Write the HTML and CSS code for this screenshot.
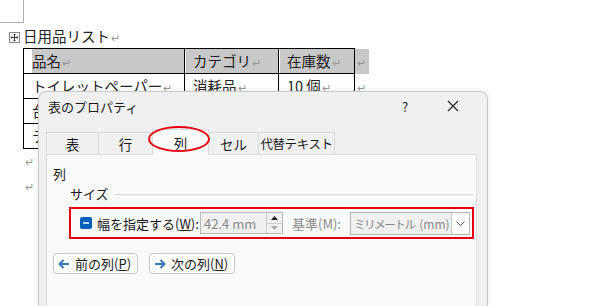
FILE: index.html
```html
<!DOCTYPE html>
<html lang="ja">
<head>
<meta charset="utf-8">
<link rel="stylesheet" href="styles.css">
</head>
<body>
<div class="page">
  <div class="corner"></div>
  <div class="doc">
    <div class="title-line">
      <span class="move-handle"><svg width="11" height="11" viewBox="0 0 11 11"><rect x="0.5" y="0.5" width="10" height="10" fill="#fff" stroke="#888"/><path d="M5.5 2v7M2 5.5h7" stroke="#333" stroke-width="1"/><path d="M5.5 1.5l-1.5 1.5h3zM5.5 9.5l-1.5-1.5h3zM1.5 5.5l1.5-1.5v3zM9.5 5.5l-1.5-1.5v3z" fill="#333"/></svg></span>
      <p class="doc-title">日用品リスト<span class="pm">↵</span></p>
    </div>
    <div class="table-wrap">
      <table class="doc-table">
        <tr class="sel"><td class="c1">品名<span class="pm">↵</span></td><td class="c2">カテゴリ<span class="pm">↵</span></td><td class="c3">在庫数<span class="pm">↵</span></td><td class="end sel-end"><span class="pm">↵</span></td></tr>
        <tr><td class="c1">トイレットペーパー<span class="pm">↵</span></td><td class="c2">消耗品<span class="pm">↵</span></td><td class="c3">10 個<span class="pm">↵</span></td><td class="end"><span class="pm">↵</span></td></tr>
        <tr><td class="c1">台</td><td class="c2"></td><td class="c3"></td><td class="end"></td></tr>
        <tr><td class="c1">テ</td><td class="c2"></td><td class="c3"></td><td class="end"></td></tr>
      </table>
    </div>
    <p class="empty"><span class="pm">↵</span></p>
    <p class="empty"><span class="pm">↵</span></p>
  </div>

  <div class="dialog">
    <div class="titlebar">
      <span class="dlg-title">表のプロパティ</span>
      <span class="help">?</span>
      <span class="close"><svg width="12" height="12" viewBox="0 0 12 12"><path d="M1 1l10 10M11 1L1 11" stroke="#222" stroke-width="1.1"/></svg></span>
    </div>
    <div class="tabs">
      <div class="tab t1">表</div>
      <div class="tab t2">行</div>
      <div class="tab t3 active">列<span class="ellipse"></span></div>
      <div class="tab t4">セル</div>
      <div class="tab t5">代替テキスト</div>
    </div>
    <div class="panel">
      <div class="sec">列</div>
      <div class="group-head"><span>サイズ</span><span class="rule"></span></div>
      <div class="size-row">
        <span class="check"><svg width="12" height="12" viewBox="0 0 12 12"><rect width="12" height="12" rx="2" fill="#005fb8"/><path d="M3 6h6" stroke="#fff" stroke-width="1.4"/></svg></span>
        <span class="lbl">幅を指定する(<u>W</u>):</span>
        <span class="spin"><span class="val">42.4 mm</span><span class="arrows"><span class="up"><svg width="7" height="4" viewBox="0 0 7 4"><path d="M0 4L3.5 0 7 4z" fill="#222"/></svg></span><span class="dn"><svg width="7" height="4" viewBox="0 0 7 4"><path d="M0 0L3.5 4 7 0z" fill="#aaa"/></svg></span></span></span>
        <span class="lbl2">基準(M):</span>
        <span class="select"><span class="sval"><span class="kana">ミリメートル</span> (mm)</span><span class="chev"><svg width="9" height="5" viewBox="0 0 9 5"><path d="M0.5 0.5L4.5 4.5 8.5 0.5" fill="none" stroke="#555" stroke-width="1"/></svg></span></span>
      </div>
      <div class="nav">
        <button class="btn"><svg width="12" height="10" viewBox="0 0 12 10"><path d="M11 5H2M5.5 1L1.5 5l4 4" fill="none" stroke="#3c78b4" stroke-width="2"/></svg><span>前の列(<u>P</u>)</span></button>
        <button class="btn"><svg width="12" height="10" viewBox="0 0 12 10"><path d="M1 5h9M6.5 1l4 4-4 4" fill="none" stroke="#3c78b4" stroke-width="2"/></svg><span>次の列(<u>N</u>)</span></button>
      </div>
    </div>
  </div>
</div>
</body>
</html>
```

FILE: styles.css
```css
* { box-sizing: border-box; }
html, body { margin: 0; padding: 0; background: #fff; }
body { width: 614px; height: 306px; overflow: hidden; font-family: "Noto Sans CJK JP", "Noto Sans", sans-serif; }
.page { position: relative; width: 614px; height: 306px; overflow: hidden; }
.corner { position: absolute; left: 0; top: 0; width: 24px; height: 23px; border-right: 1px solid #b0b0b0; border-bottom: 1px solid #b0b0b0; }
.doc { padding: 26px 0 0 9px; font-size: 14.5px; color: #222; }
.title-line { display: flex; align-items: center; height: 20px; }
.move-handle { width: 14px; display: flex; margin-top: 2px; }
.doc-title { margin: 0; line-height: 20px; }
.pm { color: #999; font-size: 11px; margin-left: 1px; }
.table-wrap { padding: 2px 0 0 14px; }
.doc-table { border-collapse: collapse; }
.doc-table td { height: 25px; padding: 0 0 0 8px; border: 1.5px solid #000; line-height: 20px; white-space: nowrap; vertical-align: middle; }
.doc-table .c1 { width: 161px; }
.doc-table .c2 { width: 94px; }
.doc-table .c3 { width: 76px; }
.doc-table td.end { border: none; width: 14px; padding: 0 0 0 1px; }
.sel td.c1, .sel td.c2, .sel td.c3 { background: #c8c8c8; box-shadow: inset 1px 0 0 #fff; }
.sel td.sel-end { background: #c8c8c8; }
.sel td.c1 { box-shadow: inset 8px 0 0 #fff; }
.empty { margin: 0 0 0 15px; height: 25px; line-height: 22px; }

.dialog { position: absolute; left: 38px; top: 91px; width: 450px; height: 215px; background: #f0f0f0; border: 1px solid #c9c9c9; border-bottom: none; border-radius: 8px 8px 0 0; box-shadow: 0 0 6px rgba(0,0,0,0.08); font-size: 13px; color: #1a1a1a; overflow: hidden; }
.titlebar { display: flex; align-items: center; height: 28px; padding: 0 0 0 9px; }
.dlg-title { flex: 1; font-size: 13px; }
.help { width: 45px; text-align: left; font-size: 13px; }
.close { width: 40px; display: flex; }
.tabs { display: flex; align-items: flex-end; margin: 10px 0 0 7px; height: 24px; position: relative; z-index: 2; }
.tab { height: 22px; border: 1px solid #dcdcdc; border-bottom: none; margin-left: -1px; background: #f0f0f0; display: flex; align-items: center; justify-content: center; font-size: 13.5px; white-space: nowrap; }
.t1 { width: 53px; margin-left: 0; }
.t2 { width: 55px; }
.t3 { width: 57px; }
.t4 { width: 51px; }
.t5 { width: 77px; font-size: 12.5px; letter-spacing: -0.4px; }
.tab.active { background: #f9f9f9; position: relative; margin-bottom: -1px; height: 26px; }
.ellipse { position: absolute; left: -5px; top: -4px; width: 62px; height: 26px; border: 2px solid #e60012; border-radius: 50%; }
.panel { margin: 0 0 0 7px; width: 431px; height: 160px; background: #f9f9f9; border: 1px solid #dcdcdc; padding: 10px 0 0 6px; }
.sec { font-size: 13px; line-height: 18px; }
.group-head { display: flex; align-items: center; margin: 1px 0 0 17px; height: 18px; font-size: 13px; }
.group-head .rule { flex: 1; height: 1px; background: #d8d8d8; margin: 2px 3px 0 6px; }
.size-row { display: flex; align-items: center; margin: 5px 0 0 16px; width: 405px; height: 32px; border: 2px solid #e60012; padding-left: 9px; white-space: nowrap; }
.check { display: flex; margin-right: 5px; }
.lbl { width: 103px; }
.spin { display: flex; align-items: center; width: 83px; height: 22px; border: 1px solid #b9b9b9; background: #f0f0f0; }
.spin .val { flex: 1; padding-left: 3px; color: #8a8a8a; font-size: 13px; }
.arrows { display: flex; flex-direction: column; width: 16px; height: 20px; border-left: 1px solid #d0d0d0; }
.arrows span { flex: 1; display: flex; align-items: center; justify-content: center; }
.arrows .up { border-bottom: 1px solid #d0d0d0; }
.lbl2 { margin-left: 9px; width: 58px; color: #8a8a8a; }
.select { display: flex; align-items: center; width: 120px; height: 23px; border: 1px solid #b4b4b4; background: #f0f0f0; }
.sval { flex: 1; padding-left: 3px; color: #8a8a8a; font-size: 12px; white-space: nowrap; overflow: hidden; }
.sval .kana { font-size: 11.5px; letter-spacing: -1.4px; margin-right: 2px; }
.chev { width: 18px; height: 21px; border-left: 1px solid #c8c8c8; background: #fff; display: flex; align-items: center; justify-content: center; flex: none; }
.nav { display: flex; gap: 11px; margin: 14px 0 0 0; }
.btn { display: flex; align-items: center; gap: 5px; height: 21px; padding: 0 6px 0 4px; border: 1px solid #c8c8c8; border-radius: 4px; background: #fdfdfd; font-family: "Noto Sans CJK JP", sans-serif; font-size: 13px; color: #1a1a1a; white-space: nowrap; }
```
